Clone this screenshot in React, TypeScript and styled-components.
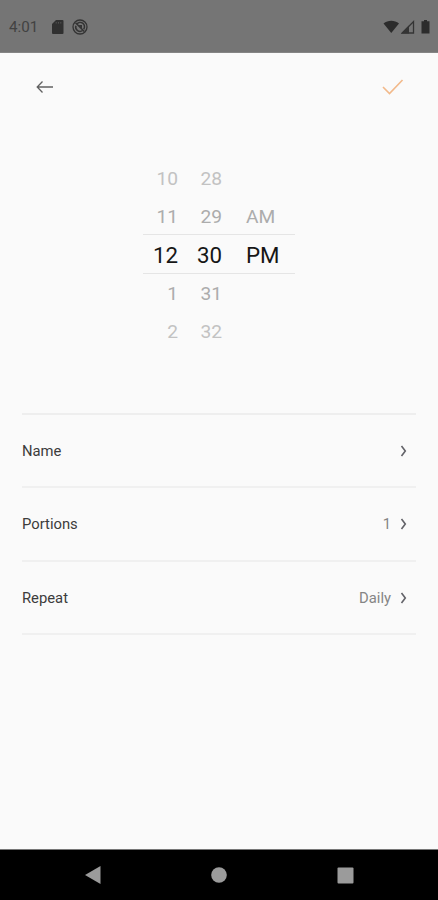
import React from "react";
import styled, { createGlobalStyle } from "styled-components";

const GlobalStyle = createGlobalStyle`
  * { box-sizing: border-box; }
  body { margin: 0; background: #fafafa; font-family: Roboto, "Liberation Sans", sans-serif; }
`;

const Screen = styled.div`
  display: flex;
  flex-direction: column;
  width: 438px;
  height: 900px;
  background: #fafafa;
  overflow: hidden;
`;

const StatusBar = styled.header`
  display: flex;
  align-items: center;
  height: 53px;
  padding: 1px 7px 0 9px;
  background: #757575;
  border-bottom: 1px solid #858585;
  color: #424242;
`;

const Clock = styled.time`
  width: 42px;
  font-size: 15.2px;
  line-height: 20px;
`;

const StatusIcons = styled.div<{ $end?: boolean }>`
  display: flex;
  align-items: center;
  gap: 7px;
  margin-left: ${(p) => (p.$end ? "auto" : "0")};
  svg { display: block; }
`;

const Toolbar = styled.nav`
  display: flex;
  align-items: center;
  justify-content: space-between;
  height: 68px;
  padding: 0 34px 0 35px;
`;

const IconButton = styled.button`
  display: flex;
  padding: 0;
  border: 0;
  background: none;
  svg { display: block; }
`;

const Picker = styled.section`
  display: grid;
  grid-template-columns: 35px 44px 1fr;
  grid-template-rows: 38px 38px 39px 38px 38px;
  width: 152px;
  margin: 38px 0 0 143px;
`;

const PickerRow = styled.div<{ $selected?: boolean; $far?: boolean }>`
  display: grid;
  grid-column: 1 / -1;
  grid-template-columns: subgrid;
  align-items: center;
  padding-top: ${(p) => (p.$selected ? 0 : 2)}px;
  font-size: ${(p) => (p.$selected ? 22.3 : 19.2)}px;
  line-height: 30px;
  color: ${(p) => (p.$selected ? "#161616" : p.$far ? "#c2c2c2" : "#acacac")};
  box-shadow: ${(p) => (p.$selected ? "0 -1px #e5e5e5, inset 0 -1px #e5e5e5" : "none")};
`;

const PickerValue = styled.span`
  text-align: right;
  &:last-child {
    text-align: left;
    padding-left: 24px;
  }
`;

const Settings = styled.ul`
  list-style: none;
  margin: 63px 22px 0;
  padding: 0;
  border-top: 2px solid #eeeeee;
`;

const SettingRow = styled.li`
  display: flex;
  align-items: center;
  height: 73.3px;
  padding: 1px 8px 0 0;
  border-bottom: 2px solid #f0f0f0;
  font-size: 14.8px;
  line-height: 20px;
`;

const SettingLabel = styled.span`
  flex: 1;
  color: #3c3c3c;
`;

const SettingValue = styled.span`
  margin-right: 9px;
  color: #858585;
`;

const Chevron = styled.svg`
  display: block;
`;

const SystemBar = styled.footer`
  display: grid;
  grid-template-columns: repeat(3, 126.5px);
  justify-content: center;
  align-items: center;
  justify-items: center;
  height: 51px;
  margin-top: auto;
  background: #000;
  border-top: 1px solid #777;
  svg { display: block; }
`;

const times = [
  { hour: "10", minute: "28", period: "", far: true },
  { hour: "11", minute: "29", period: "AM" },
  { hour: "12", minute: "30", period: "PM", selected: true },
  { hour: "1", minute: "31", period: "" },
  { hour: "2", minute: "32", period: "", far: true },
];

const settings = [
  { label: "Name", value: "" },
  { label: "Portions", value: "1" },
  { label: "Repeat", value: "Daily" },
];

export default function App() {
  return (
    <>
      <GlobalStyle />
      <Screen>
        <StatusBar>
          <Clock>4:01</Clock>
          <StatusIcons>
            <svg width="14" height="16" viewBox="0 0 14 16">
              <path d="M1 5 5 1h6.5a1 1 0 0 1 1 1v12a1 1 0 0 1-1 1H2a1 1 0 0 1-1-1z" fill="#303030" />
              <path d="M5.200 3v1.600M7.500 3v1.600M9.800 3v1.600" stroke="#555" strokeWidth="0.900" />
            </svg>
            <svg width="16" height="16" viewBox="0 0 16 16" fill="none" stroke="#333">
              <circle cx="8" cy="8" r="7" strokeWidth="1.300" />
              <path d="M4.700 5.200a4.300 4.300 0 0 1 7 5M10.600 11.500a4.300 4.300 0 0 1-6.700-4.700" strokeWidth="1.500" />
              <path d="m3.500 3.700 8.800 8.800" strokeWidth="1.500" />
              <path d="M6.500 6H10v3.500z" fill="#333" stroke="none" />
            </svg>
          </StatusIcons>
          <StatusIcons $end>
            <svg width="48" height="16" viewBox="0 0 48 16">
              <path d="M.5 4.500C5 .7 11.500.7 16 4.500L8.250 14z" fill="#2c2c2c" />
              <path d="M19.300 14 30.500 2.500V14z" fill="none" stroke="#343434" strokeWidth="1.300" />
              <path d="M18 14.600 26 6.500v8.100z" fill="#343434" />
              <path d="M38.500 2.200h2.500V1h3v1.200h2.500v12.300h-8z" fill="#2c2c2c" />
            </svg>
          </StatusIcons>
        </StatusBar>
        <Toolbar>
          <IconButton aria-label="Back">
            <svg width="20" height="16" viewBox="0 0 20 16" fill="none" stroke="#626262" strokeWidth="1.3">
              <path d="M18 8H2.500M7.500 2.500 2.200 8l5.300 5.500" />
            </svg>
          </IconButton>
          <IconButton aria-label="Save">
            <svg width="22" height="18" viewBox="0 0 22 18" fill="none" stroke="#f2b98a" strokeWidth="1.6">
              <path d="M1 9 7.500 15.500 20.500 2" />
            </svg>
          </IconButton>
        </Toolbar>
        <Picker>
          {times.map((t) => (
            <PickerRow key={t.minute} $selected={t.selected} $far={t.far}>
              <PickerValue>{t.hour}</PickerValue>
              <PickerValue>{t.minute}</PickerValue>
              <PickerValue>{t.period}</PickerValue>
            </PickerRow>
          ))}
        </Picker>
        <Settings>
          {settings.map((s) => (
            <SettingRow key={s.label}>
              <SettingLabel>{s.label}</SettingLabel>
              <SettingValue>{s.value}</SettingValue>
              <Chevron width="8" height="12" viewBox="0 0 8 12" fill="none" stroke="#626268" strokeWidth="1.6">
                <path d="m1.500 1 3.800 5-3.800 5" />
              </Chevron>
            </SettingRow>
          ))}
        </Settings>
        <SystemBar>
          <svg width="18" height="20" viewBox="0 0 18 20"><path d="M1 10 16.500 1v18z" fill="#9b9b9b" /></svg>
          <svg width="16" height="16" viewBox="0 0 16 16"><circle cx="8" cy="8" r="7.800" fill="#9b9b9b" /></svg>
          <svg width="17" height="17" viewBox="0 0 17 17"><rect x=".5" y=".5" width="16" height="16" rx="1" fill="#9b9b9b" /></svg>
        </SystemBar>
      </Screen>
    </>
  );
}
